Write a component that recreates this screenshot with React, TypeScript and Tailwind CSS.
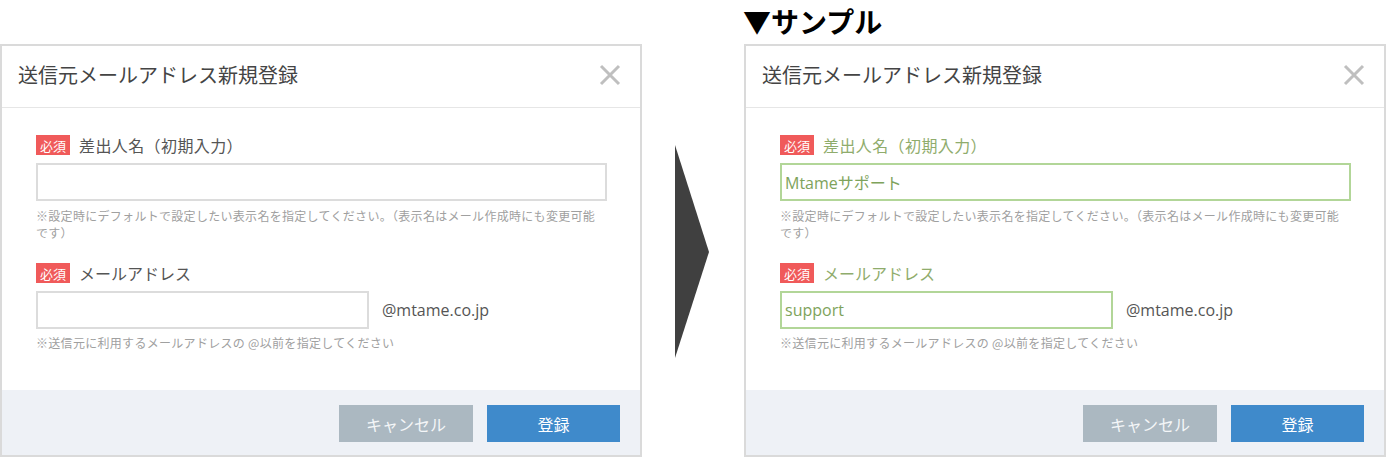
import React from "react";

const JP = { fontFamily: '"Noto Sans CJK JP", "Noto Sans", sans-serif' };
const LATIN = { fontFamily: '"Open Sans", "Noto Sans CJK JP", sans-serif' };

function CloseIcon() {
  return (
    <svg width="22" height="22" viewBox="0 0 22 22" className="block">
      <path d="M2 2 L20 20 M20 2 L2 20" stroke="#bfbfbf" strokeWidth="3" strokeLinecap="butt" />
    </svg>
  );
}

function Badge() {
  return (
    <span className="inline-flex items-center justify-center w-[34px] h-[20px] bg-[#f05a5a] text-white text-[13px] leading-none">
      必須
    </span>
  );
}

function Modal({ sample }: { sample: boolean }) {
  const labelColor = sample ? "text-[#8fac6c]" : "text-[#555555]";
  const inputBorder = sample ? "border-[#b2d698]" : "border-[#dcdcdc]";
  return (
    <div className="w-[642px] h-[413px] border-2 border-[#dadada] bg-white flex flex-col" style={JP}>
      <div className="h-[62px] shrink-0 flex items-center justify-between pl-[16px] pr-[19px] pb-[3px] border-b border-[#e6e6e6]">
        <span className="text-[20px] leading-[20px] text-[#444444]">送信元メールアドレス新規登録</span>
        <CloseIcon />
      </div>
      <div className="flex-1 flex flex-col pl-[34px] pr-[33px] pt-[27px]">
        <div className="h-[20px] flex items-center gap-[9px]">
          <Badge />
          <span className={`text-[16px] leading-[20px] tracking-[0.4px] ${labelColor}`}>差出人名（初期入力）</span>
        </div>
        <div className={`mt-[8px] h-[38px] w-full border-2 ${inputBorder} flex items-center pl-[3px]`}>
          {sample && (
            <span className="text-[16px] text-[#7ea35b]" style={LATIN}>
              Mtame<span style={JP}>サポート</span>
            </span>
          )}
        </div>
        <p className="mt-[6px] text-[12px] leading-[17px] tracking-[0.3px] text-[#a0a0a0]">
          ※設定時にデフォルトで設定したい表示名を指定してください。（表示名はメール作成時にも変更可能
          <br />
          です）
        </p>
        <div className="mt-[22px] h-[20px] flex items-center gap-[9px]">
          <Badge />
          <span className={`text-[16px] leading-[20px] ${labelColor}`}>メールアドレス</span>
        </div>
        <div className="mt-[8px] flex items-center gap-[13px]">
          <div className={`h-[38px] w-[333px] border-2 ${inputBorder} flex items-center pl-[3px]`}>
            {sample && (
              <span className="text-[16px] text-[#7ea35b]" style={LATIN}>
                support
              </span>
            )}
          </div>
          <span className="text-[16px] text-[#555555]" style={LATIN}>
            @mtame.co.jp
          </span>
        </div>
        <p className="mt-[5px] text-[12px] leading-[17px] tracking-[0.3px] text-[#a0a0a0]">
          ※送信元に利用するメールアドレスの @以前を指定してください
        </p>
      </div>
      <div className="h-[65px] shrink-0 bg-[#eef1f6] flex items-start justify-end gap-[14px] pt-[15px] pr-[20px]">
        <button className="w-[134px] h-[37px] bg-[#abb8c1] text-[#f4f6f8] text-[16px]">キャンセル</button>
        <button className="w-[133px] h-[37px] bg-[#3f8acb] text-white text-[16px]">登録</button>
      </div>
    </div>
  );
}

export default function App() {
  return (
    <div className="w-[1387px] h-[458px] bg-white flex" style={JP}>
      <div className="pt-[44px]">
        <Modal sample={false} />
      </div>
      <div className="w-[102px] pt-[145px] pl-[33px]">
        <svg width="35" height="213" viewBox="0 0 35 213" className="block">
          <polygon points="0,0 34,107 0,213" fill="#404040" />
        </svg>
      </div>
      <div className="flex flex-col">
        <div className="h-[44px] pt-[7px]">
          <span className="text-[28px] leading-[28px] font-bold text-black block -ml-[1px]">▼サンプル</span>
        </div>
        <Modal sample={true} />
      </div>
    </div>
  );
}
